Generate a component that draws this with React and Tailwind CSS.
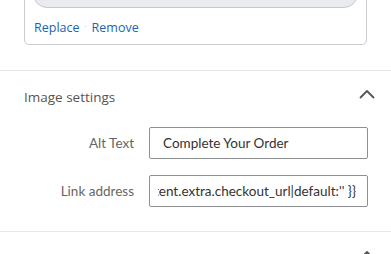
function ChevronUp({ className = '' }) {
  return (
    <svg viewBox="0 0 16 10" width="16" height="10" fill="none" stroke="currentColor" strokeWidth="1.8" strokeLinecap="round" strokeLinejoin="round" className={className} aria-hidden>
      <path d="M1.5 8.5 8 2l6.5 6.5" />
    </svg>
  )
}

const sans = "font-['Open_Sans','Noto_Sans',sans-serif]"
const proxima = "font-['Lato','Noto_Sans',sans-serif]"

function Field({ label, children }) {
  return (
    <div className="flex items-center">
      <div className={`w-[110px] text-right text-[13.5px] text-[#666] ${proxima}`}>{label}</div>
      <div className={`ml-[15px] flex h-[32px] w-[219px] items-center overflow-hidden rounded-[2px] border border-[#8c8f94] bg-white px-[13px] text-[13.5px] text-[#333] ${proxima}`}>
        {children}
      </div>
    </div>
  )
}

export default function App() {
  return (
    <div className="relative h-[254px] w-[391px] overflow-hidden bg-white">
      {/* image source card, scrolled so only its bottom shows */}
      <div className="px-6 pb-[25px]">
        <div className="-mt-[29px] rounded-[5px] border border-[#c9ccd1] px-2 pt-2 pb-2">
          <div className={`flex h-7 items-center rounded-full border border-[#c5c9ce] bg-[#e9ebee] px-[9px] pb-[5px] text-[13px] text-[#333] ${sans}`}>
            Dynamic image
          </div>
          <div className={`mt-3 flex h-4 items-center pl-px text-[12.5px] leading-4 text-[#1d63b4] ${sans}`}>
            <span>Replace</span>
            <span className="mx-[5px] -mt-[5px] text-[8px] text-[#aaa]">·</span>
            <span>Remove</span>
          </div>
        </div>
      </div>

      <div className="border-t border-[#e6e8eb]">
        <div className="flex h-[52px] items-center justify-between pl-6 pr-[16px]">
          <span className={`text-[13.5px] text-[#555] ${sans}`}>Image settings</span>
          <ChevronUp className="-mt-[6px] text-[#555]" />
        </div>
        <div className="flex flex-col gap-[16px] pl-6 pt-[4px] pb-[24px]">
          <Field label="Alt Text">Complete Your Order</Field>
          <Field label="Link address">
            <div className="-ml-[5px] -mr-[2px] flex min-w-0 flex-1 justify-end overflow-hidden whitespace-nowrap">
              <span className="shrink-0">{"{{ content.extra.checkout_url|default:'' }}"}</span>
            </div>
          </Field>
        </div>
      </div>

      <div className="border-t border-[#e6e8eb]">
        <div className="flex h-[52px] items-center justify-between pl-6 pr-[16px]">
          <span className={`text-[13.5px] text-[#555] ${sans}`}>Layout settings</span>
          <ChevronUp className="-mt-[6px] text-[#555]" />
        </div>
      </div>
    </div>
  )
}
